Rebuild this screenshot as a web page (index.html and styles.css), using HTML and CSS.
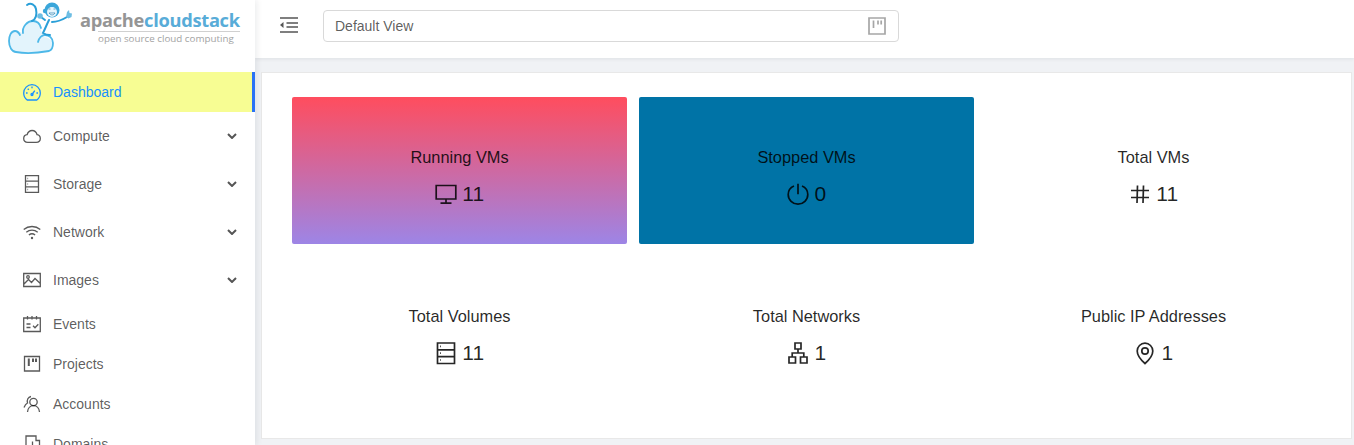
FILE: index.html
```html
<!DOCTYPE html>
<html lang="en">
<head>
    <meta charset="utf-8">
    <title>Apache CloudStack Dashboard</title>
    <link rel="stylesheet" href="styles.css">
</head>
<body>
    <aside class="sidebar">
        <div class="logo">
            <svg class="logo-mark" width="75" height="58" viewBox="0 0 75 58">
                <path class="logo-cloud-fill" d="M15 52c-4 0-6-6-6-11 0-6 3-10 7-10 3 0 5 1 6 2 0-6 4-12 10-12 5 0 9 3 9 9l2 7c5 0 10 3 10 8 0 4-2 6-5 7-11 1-22 2-33 0z"/>
                <path class="logo-cloud" d="M20 35c-1-2-3-4-5-4-4 0-6 5-6 10 0 6 3 11 7 11 10 2 22 1 33-1 3-1 4-4 4-8 0-5-4-8-8-8-3 0-6 3-7 7"/>
                <path class="logo-cloud" d="M23 33c-1-6 4-12 10-12 4 0 7 3 8 7"/>
                <path class="logo-tail" d="M32 21c4-2 5-7 4-12-1-4-5-7-9-4"/>
                <path class="logo-arm" d="M52 22c5 0 10-2 15-5M49 20c-2 4-4 9-6 13 3 2 5 2 7 2M45 20l-4-3"/>
                <circle class="logo-hand" cx="40" cy="16" r="2.800"/>
                <path class="logo-hand" d="M66 17l1-5 2-2 .5 3 2.500.500-.5 3.500-3 1.500z"/>
                <circle class="logo-ear" cx="45" cy="11" r="2.200"/>
                <circle class="logo-head" cx="52" cy="10" r="7.500"/>
                <circle class="logo-face" cx="52" cy="12" r="5"/>
                <path class="logo-mouth" d="M49 13c2 2.500 4.500 2.500 6 0zM48.500 9h2M53.500 9h2"/>
            </svg>
            <div class="logo-text">
                <div class="logo-name"><span class="logo-apache">apache</span><span class="logo-stack">cloudstack</span></div>
                <div class="logo-tag">open source cloud computing</div>
            </div>
        </div>
        <ul class="menu">
            <li class="menu-item active">
                <svg class="menu-icon" viewBox="0 0 18 18"><path d="M4.200 17C2 15.400.7 12.900.7 10a8.300 8.300 0 0 1 16.600 0c0 2.900-1.300 5.400-3.500 7z"/><path d="M9 11.500l2.800-3.800M9 3.600v1.600M3 10h1.600M13.400 10H15M4.700 5.700l1.100 1.100"/><circle cx="9" cy="11.500" r="1"/></svg>
                <span>Dashboard</span>
            </li>
            <li class="menu-item sub">
                <svg class="menu-icon" viewBox="0 0 18 18"><path d="M4.800 15.300C2.400 15.300.7 13.600.7 11.500c0-2 1.500-3.600 3.400-3.800C4.900 5.200 6.800 3.500 9.100 3.500c2.400 0 4.300 1.700 5 4.200 1.800.3 3.200 1.900 3.200 3.800 0 2.100-1.700 3.800-4.100 3.800z"/></svg>
                <span>Compute</span>
                <svg class="chevron" viewBox="0 0 10 6"><path d="M1 1l4 4 4-4"/></svg>
            </li>
            <li class="menu-item sub">
                <svg class="menu-icon" viewBox="0 0 18 18"><path d="M2.500.7h13v16.600h-13zM2.500 6.200h13M2.500 11.800h13M4.500 3.500h.6M4.500 9h.6M4.500 14.500h.6"/></svg>
                <span>Storage</span>
                <svg class="chevron" viewBox="0 0 10 6"><path d="M1 1l4 4 4-4"/></svg>
            </li>
            <li class="menu-item sub">
                <svg class="menu-icon" viewBox="0 0 18 18"><path d="M.7 6.500c4.800-4 11.800-4 16.600 0M3.300 9.300c3.300-2.800 8.100-2.800 11.400 0M5.900 12c1.800-1.500 4.400-1.500 6.200 0"/><circle class="dot" cx="9" cy="15" r="1.200"/></svg>
                <span>Network</span>
                <svg class="chevron" viewBox="0 0 10 6"><path d="M1 1l4 4 4-4"/></svg>
            </li>
            <li class="menu-item sub last-sub">
                <svg class="menu-icon" viewBox="0 0 18 18"><path d="M.7 2.500h16.600v13H.7zM1 13l4.500-4.500 3 3 3.500-4 5.300 5"/><circle cx="5" cy="6" r="1.300"/></svg>
                <span>Images</span>
                <svg class="chevron" viewBox="0 0 10 6"><path d="M1 1l4 4 4-4"/></svg>
            </li>
            <li class="menu-item">
                <svg class="menu-icon" viewBox="0 0 18 18"><path d="M.7 3h16.600v13.500H.7zM4.500 1v3.500M9 1v3.500M13.500 1v3.500M3.500 9h4M3.500 12.500h4M10 10.800l2 2 3.300-3.500"/></svg>
                <span>Events</span>
            </li>
            <li class="menu-item">
                <svg class="menu-icon" viewBox="0 0 18 18"><path d="M1.500 1.500h15v14.500h-15z"/><path class="bars" d="M5.800 3.500v7.500M10 3.500v3.500M13 3.500v3.500"/></svg>
                <span>Projects</span>
            </li>
            <li class="menu-item">
                <svg class="menu-icon" viewBox="0 0 18 18"><circle cx="10.500" cy="7" r="3.700"/><path d="M4.500 17c.3-3.700 2.700-6.300 6-6.300s5.700 2.600 6 6.300M1 12.500C2 10 3.500 8.500 4.500 8 3.700 5 5 2 8 1.500"/></svg>
                <span>Accounts</span>
            </li>
            <li class="menu-item">
                <svg class="menu-icon" viewBox="0 0 18 18"><path d="M3 1h10v4.500h3.500v11H3zM3 11h13M9.500 6.500v9"/></svg>
                <span>Domains</span>
            </li>
        </ul>
    </aside>
    <div class="main">
        <header class="topbar">
            <svg class="fold-icon" viewBox="0 0 18 16"><path class="fold-lines" d="M0 1h18M6.500 6h11.500M6.500 10h11.500M0 15h18"/><path class="fold-arrow" d="M3.500 5v6L0 8z"/></svg>
            <div class="view-select">
                <span>Default View</span>
                <svg class="view-icon" viewBox="0 0 18 18"><path d="M1 1h16v16H1z"/><path class="bars" d="M5.500 3.500v7.500M10 3.500v4M13.200 3.500v4"/></svg>
            </div>
        </header>
        <section class="content">
            <div class="panel">
                <div class="chart-card running">
                    <h3>Running VMs</h3>
                    <div class="stat">
                        <svg class="stat-icon" viewBox="0 0 24 24"><path d="M2.200 3.500h19.600v13.500H2.200zM12 17v4M6.500 21.200h11"/></svg>
                        <span>11</span>
                    </div>
                </div>
                <div class="chart-card stopped">
                    <h3>Stopped VMs</h3>
                    <div class="stat">
                        <svg class="stat-icon" viewBox="0 0 24 24"><path d="M8 4C4.500 5.500 2.200 8.800 2.200 12.500c0 5.300 4.400 9.600 9.800 9.600s9.800-4.300 9.800-9.600C21.800 8.800 19.500 5.500 16 4M12 1.800v10.500"/></svg>
                        <span>0</span>
                    </div>
                </div>
                <div class="chart-card">
                    <h3>Total VMs</h3>
                    <div class="stat">
                        <svg class="stat-icon" viewBox="0 0 24 24"><path d="M3 8.500h18M3 15.500h18M9.500 3.500L9 21M15.500 3.500L15 21"/></svg>
                        <span>11</span>
                    </div>
                </div>
                <div class="chart-card">
                    <h3>Total Volumes</h3>
                    <div class="stat">
                        <svg class="stat-icon" viewBox="0 0 24 24"><path d="M3.500 2h17v20.500h-17zM3.500 8.800h17M3.500 15.700h17M6 5.400h.8M6 12.200h.8M6 19h.8"/></svg>
                        <span>11</span>
                    </div>
                </div>
                <div class="chart-card">
                    <h3>Total Networks</h3>
                    <div class="stat">
                        <svg class="stat-icon" viewBox="0 0 24 24"><path d="M9 2h6v6H9zM3 16h6.500v6H3zM14.500 16H21v6h-6.500zM12 8v4M6.200 16v-4h11.600v4"/></svg>
                        <span>1</span>
                    </div>
                </div>
                <div class="chart-card">
                    <h3>Public IP Addresses</h3>
                    <div class="stat">
                        <svg class="stat-icon" viewBox="0 0 24 24"><path d="M12 22.500C8 19 4.200 15 4.200 10A7.800 7.800 0 0 1 19.800 10C19.800 15 16 19 12 22.500z"/><circle cx="12" cy="10" r="3.200"/></svg>
                        <span>1</span>
                    </div>
                </div>
            </div>
        </section>
    </div>
</body>
</html>
```

FILE: styles.css
```css
:root {
    --clr-text: rgba(0, 0, 0, 0.65);
    --clr-title: rgba(0, 0, 0, 0.85);
    --clr-blue: #1890ff;
    --clr-bg: #f0f2f5;
    --clr-border: #e8e8e8;
}
* {
    box-sizing: border-box;
}
html, body {
    height: 100%;
}
body {
    margin: 0;
    display: flex;
    height: 445px;
    overflow: hidden;
    background-color: var(--clr-bg);
    color: var(--clr-text);
    font-family: "Liberation Sans", Arial, sans-serif;
    font-size: 14px;
}
svg {
    display: block;
    flex: none;
}

/* sidebar */
.sidebar {
    width: 255px;
    flex: none;
    background: #fff;
    box-shadow: 2px 0 6px rgba(0, 21, 41, 0.08);
    z-index: 2;
}
.logo {
    display: flex;
    height: 58px;
}
.logo-cloud-fill {
    fill: #e3f4fc;
}
.logo-cloud {
    fill: none;
    stroke: #4db8e8;
    stroke-width: 1.800;
    stroke-linecap: round;
}
.logo-tail, .logo-arm {
    fill: none;
    stroke: #2a9fd8;
    stroke-width: 2;
    stroke-linecap: round;
}
.logo-head, .logo-ear, .logo-hand {
    fill: #3aa6da;
}
.logo-hand {
    fill: #6dbde3;
}
.logo-face {
    fill: #e6f5fc;
}
.logo-mouth {
    fill: #fff;
    stroke: #2a7fb0;
    stroke-width: 0.700;
}
.logo-text {
    margin-left: 5px;
    padding-top: 9px;
}
.logo-name {
    font-family: "Open Sans", "Liberation Sans", sans-serif;
    font-size: 18.300px;
    font-weight: 700;
    line-height: 22px;
    letter-spacing: -0.300px;
    white-space: nowrap;
}
.logo-apache {
    color: #959595;
}
.logo-stack {
    color: #58acd8;
}
.logo-tag {
    width: 142px;
    margin-left: 18px;
    border-top: 1px solid #d0d0d0;
    font-family: "Open Sans", "Liberation Sans", sans-serif;
    font-size: 9.800px;
    line-height: 13px;
    color: #a3a3a3;
    white-space: nowrap;
}
.menu {
    list-style: none;
    margin: 14px 0 0;
    padding: 0;
}
.menu-item {
    display: flex;
    align-items: center;
    gap: 12px;
    height: 40px;
    padding-left: 23px;
    padding-right: 18px;
}
.menu-item span {
    flex: 1;
}
.menu-item.sub {
    margin-bottom: 8px;
}
.menu-item.last-sub {
    margin-bottom: 4px;
}
.menu-item.active {
    margin-bottom: 4px;
    border-right: 3px solid #2a72f5;
    background: #f7fd93;
    color: var(--clr-blue);
}
.menu-icon {
    width: 18px;
    height: 18px;
    fill: none;
    stroke: currentColor;
    stroke-width: 1.300;
}
.menu-icon .dot {
    fill: currentColor;
    stroke: none;
}
.menu-icon .bars {
    stroke-width: 2;
}
.chevron {
    width: 10px;
    height: 6px;
    fill: none;
    stroke: #555;
    stroke-width: 2;
}

/* top bar */
.main {
    flex: 1;
    min-width: 0;
    display: flex;
    flex-direction: column;
}
.topbar {
    display: flex;
    align-items: center;
    height: 58px;
    flex: none;
    padding-left: 25px;
    padding-bottom: 6px;
    background: #fff;
    box-shadow: 0 1px 4px rgba(0, 21, 41, 0.08);
}
.fold-icon {
    width: 18px;
    height: 16px;
    margin-bottom: 2px;
}
.fold-lines {
    fill: none;
    stroke: #555;
    stroke-width: 1.600;
}
.fold-arrow {
    fill: #555;
}
.view-select {
    display: flex;
    align-items: center;
    justify-content: space-between;
    width: 576px;
    height: 32px;
    margin-left: 25px;
    padding: 0 12px 0 11px;
    border: 1px solid #d9d9d9;
    border-radius: 4px;
}
.view-icon {
    width: 18px;
    height: 18px;
    fill: none;
    stroke: #a6a6a6;
    stroke-width: 1.700;
}

/* dashboard */
.content {
    flex: 1;
    padding: 14px 2px 6px 6px;
}
.panel {
    display: grid;
    grid-template-columns: repeat(3, 335px);
    grid-auto-rows: 147px;
    gap: 12px;
    height: 367px;
    padding: 24px 0 0 30px;
    background: #fff;
    border: 1px solid var(--clr-border);
}
.chart-card {
    padding-top: 48px;
    border-radius: 2px;
    text-align: center;
    color: var(--clr-title);
}
.chart-card h3 {
    margin: 0;
    font-size: 16.380px;
    font-weight: normal;
    line-height: 25px;
}
.stat {
    display: flex;
    align-items: center;
    justify-content: center;
    gap: 4.500px;
    margin-top: 9px;
    padding-right: 1px;
    font-size: 21px;
    line-height: 30px;
}
.stat-icon {
    width: 24px;
    height: 24px;
    fill: none;
    stroke: currentColor;
    stroke-width: 1.700;
}
.running {
    background: linear-gradient(#ff4d5e, #9d85e6);
}
.stopped {
    background: #0073a6;
}
```
